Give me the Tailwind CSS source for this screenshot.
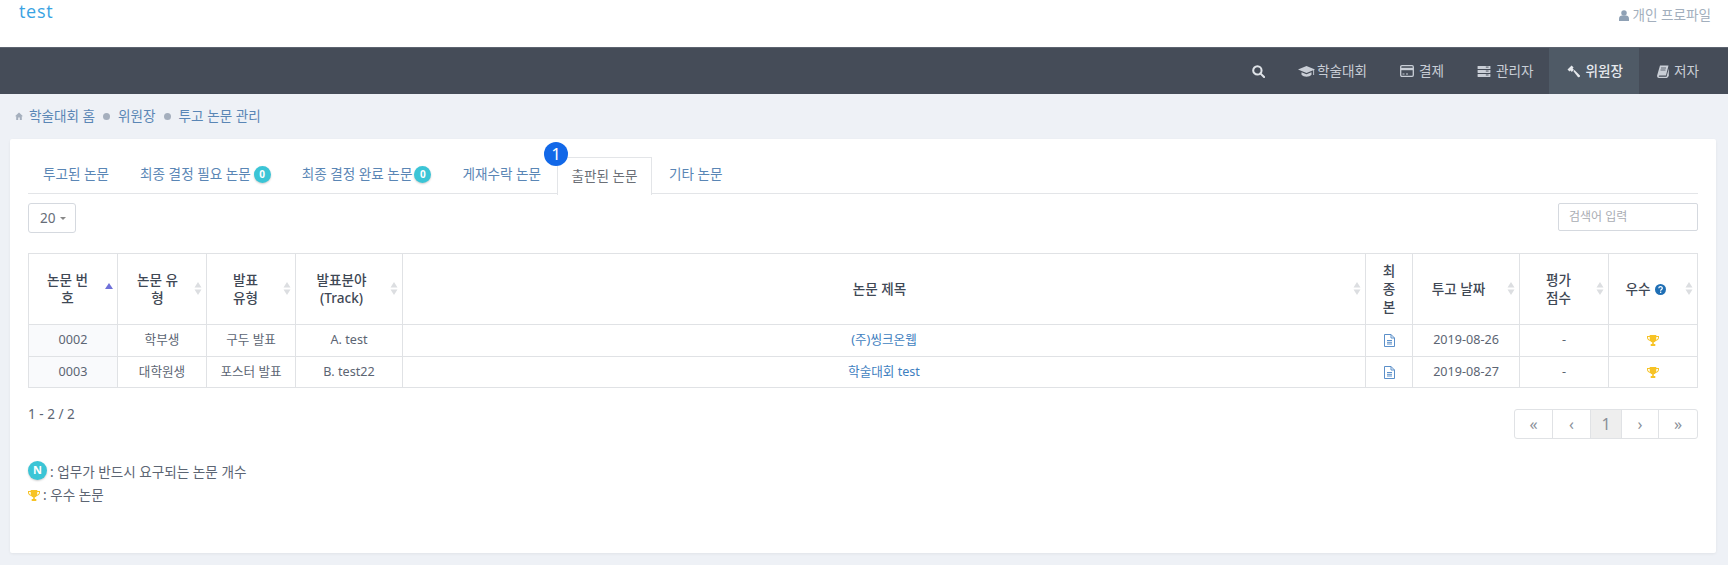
<!DOCTYPE html>
<html lang="ko">
<head>
    <meta charset="UTF-8">
    <title>투고 논문 관리</title>
    <script src="https://cdn.jsdelivr.net/npm/@tailwindcss/browser@4"></script>
</head>
<body class="bg-[#eef1f6] text-[13.6px] text-[#5c6573] font-['Noto_Sans','Noto_Sans_CJK_KR',sans-serif] overflow-hidden h-[565px]">
    <!-- top bar -->
    <header class="h-[47px] bg-white flex justify-between pl-[19px] pr-[17px]">
        <a class="text-[18px] leading-[22px] tracking-[0.7px] text-[#3aa3e3] font-['Open_Sans',sans-serif]">test</a>
        <a class="flex items-center gap-[3px] h-[30px] text-[13.6px] text-[#a3afbd]">
            <svg class="w-[10px] h-[11px]" viewBox="0 0 12 13" fill="#8fa1b5"><circle cx="6" cy="3.5" r="3.3"/><path d="M0 13V10c0-2.2 1.8-3.6 3.5-3.6h5C10.200 6.400 12 7.800 12 10v3z"/></svg>
            개인 프로파일
        </a>
    </header>

    <!-- nav -->
    <nav class="h-[47px] bg-[#454c58] border-t border-[#5d6470] flex justify-end pr-[11px] text-[13.6px] text-[#c9ced6]">
        <a class="flex items-center pl-[18px] pr-[18px]">
            <svg class="w-[13px] h-[13px]" viewBox="0 0 14 14" fill="none" stroke="#dfe3e8" stroke-width="2.200"><circle cx="5.800" cy="5.800" r="4.500"/><path d="M9 9l4 4" stroke-linecap="round"/></svg>
        </a>
        <a class="flex items-center gap-[2px] px-[15px]">
            <svg class="w-[17px] h-[13px]" viewBox="0 0 17 13" fill="#c9ced6"><path d="M8.500 1L0 4.500l8.500 3.500L17 4.500z"/><path d="M3.500 7.200v2.500c1 1.300 3 2 5 2s4-.7 5-2V7.200l-5 2z"/><rect x="15.200" y="5" width="0.900" height="5"/></svg>
            학술대회
        </a>
        <a class="flex items-center gap-[5px] pl-[18px] pr-[15px]">
            <svg class="w-[14px] h-[12px]" viewBox="0 0 14 12" fill="none" stroke="#c9ced6"><rect x="0.700" y="0.700" width="12.600" height="10.600" rx="1.200" stroke-width="1.300"/><path d="M1 4h12" stroke-width="2.400"/><path d="M2.500 9h2M6 9h2" stroke-width="1"/></svg>
            결제
        </a>
        <a class="flex items-center gap-[5px] pl-[18px] pr-[16px]">
            <svg class="w-[14px] h-[11px]" viewBox="0 0 14 12" fill="#c9ced6"><rect y="0" width="14" height="3.400" rx="0.500"/><rect y="4.300" width="14" height="3.400" rx="0.500"/><rect y="8.600" width="14" height="3.400" rx="0.500"/><path d="M9 1.200h3M9 5.500h3M9 9.800h3" stroke="#454c58" stroke-width="1"/></svg>
            관리자
        </a>
        <a class="flex items-center gap-[5px] pl-[18px] pr-[16px] bg-[#4f5a66] text-[#e6e9ed] font-medium">
            <svg class="w-[13px] h-[13px]" viewBox="0 0 13 13" fill="#e6e9ed"><path d="M4.600 0.500L0.500 4.600l2 2 1-1 1.300 1.300 2.100-2.100L5.600 3.500l1-1z"/><path d="M6.300 6l1.100-1.100 5.300 5.300c.4.400.4 1 0 1.500l-.3.300c-.4.400-1 .4-1.500 0z"/></svg>
            위원장
        </a>
        <a class="flex items-center gap-[5px] px-[18px]">
            <svg class="w-[12px] h-[13px]" viewBox="0 0 12 13" fill="#c9ced6"><path d="M3 0.500h8.500L9 10.500H2.500C1.600 10.500 1.500 11.800 2.500 11.800H9.500L11.800 3.500V11l-1.800 2H2C0.500 13-.2 11.500.2 10.300z"/><path d="M4 3h5M3.500 5h5" stroke="#454c58" stroke-width="0.800"/></svg>
            저자
        </a>
    </nav>

    <!-- breadcrumb -->
    <div class="h-[45px] flex items-center pl-[15px] pb-[1px] text-[13.6px] text-[#5a86b5]">
        <svg class="w-[8px] h-[8px] mr-[6px]" viewBox="0 0 8 8" fill="#a5afbd"><path d="M4 .5L0 4.200h1.200V8h2V5.500h1.600V8h2V4.200H8z"/></svg>
        <span>학술대회 홈</span>
        <span class="w-[7px] h-[7px] rounded-full bg-[#a5afbd] mx-[8px]"></span>
        <span>위원장</span>
        <span class="w-[7px] h-[7px] rounded-full bg-[#a5afbd] mx-[8px]"></span>
        <span>투고 논문 관리</span>
    </div>

    <!-- card -->
    <main class="relative ml-[10px] w-[1706px] h-[414px] bg-white rounded-[2px] shadow-[0_1px_3px_rgba(0,0,0,0.06)] px-[18px] pt-[18px]">
        <!-- tabs -->
        <div class="relative flex h-[37px] border-b border-[#e3e5e8] text-[13.6px] text-[#5a86b5]">
            <a class="flex items-center pl-[15px] pr-[16px] pb-[1px]">투고된 논문</a>
            <a class="flex items-center gap-[3px] pl-[15px] pr-[15px] pb-[1px]">최종 결정 필요 논문 <span class="w-[17px] h-[17px] rounded-full bg-[#3bc5d6] text-white text-[10px] font-bold flex items-center justify-center shadow-[0_1px_2px_rgba(0,0,0,0.2)]">0</span></a>
            <a class="flex items-center gap-[2px] pl-[16px] pr-[15px] pb-[1px]">최종 결정 완료 논문 <span class="w-[17px] h-[17px] rounded-full bg-[#3bc5d6] text-white text-[10px] font-bold flex items-center justify-center shadow-[0_1px_2px_rgba(0,0,0,0.2)]">0</span></a>
            <a class="flex items-center pl-[16px] pr-[16px] pb-[1px]">게재수락 논문</a>
            <a class="flex items-center justify-center w-[95px] h-[38px] pb-[1px] bg-white border border-b-0 border-[#e3e5e8] text-[#6b6f76]">출판된 논문</a>
            <a class="flex items-center px-[17px] pb-[1px]">기타 논문</a>
            <span class="absolute left-[516px] top-[-15px] w-[24px] h-[24px] rounded-full bg-[#1268e8] text-white text-[17px] flex items-center justify-center">1</span>
        </div>

        <!-- filter row -->
        <div class="flex justify-between items-start mt-[9px]">
            <div class="w-[48px] h-[30px] border border-[#d5d9df] rounded-[3px] flex items-center pl-[11px] gap-[4px] text-[13.6px] text-[#666d78]">
                20 <span class="w-0 h-0 border-x-[3px] border-x-transparent border-t-[3px] border-t-[#888]"></span>
            </div>
            <div class="w-[140px] h-[28px] border border-[#d5d9df] rounded-[2px] flex items-center pl-[10px] text-[12px] text-[#a9adb3]">검색어 입력</div>
        </div>

        <!-- table -->
        <table class="mt-[20px] w-[1670px] table-fixed border-collapse text-center text-[12.6px]">
            <colgroup>
                <col class="w-[89px]"><col class="w-[89px]"><col class="w-[89px]"><col class="w-[107px]"><col><col class="w-[47px]"><col class="w-[107px]"><col class="w-[89px]"><col class="w-[89px]">
            </colgroup>
            <thead class="text-[13.6px] text-[#3f4855]">
                <tr class="h-[71px]">
                    <th class="relative border border-[#e0e2e5] font-medium leading-[18px] pl-[17px] pr-[28px]">논문 번호<svg class="absolute right-[4px] top-[29px] w-[8px] h-[6px]" viewBox="0 0 8 6" fill="#6f71d9"><path d="M4 0l4 6H0z"/></svg></th>
                    <th class="relative border border-[#e0e2e5] font-medium leading-[18px] pl-[15px] pr-[24px]">논문 유형<svg class="absolute right-[4px] top-[28px] w-[8px] h-[13px]" viewBox="0 0 8 13" fill="#dcdee1"><path d="M4 0l3.500 5.500H.5zM4 13L.5 7.500h7z"/></svg></th>
                    <th class="relative border border-[#e0e2e5] font-medium leading-[18px] pl-[15px] pr-[26px]">발표<br>유형<svg class="absolute right-[4px] top-[28px] w-[8px] h-[13px]" viewBox="0 0 8 13" fill="#dcdee1"><path d="M4 0l3.500 5.500H.5zM4 13L.5 7.500h7z"/></svg></th>
                    <th class="relative border border-[#e0e2e5] font-medium leading-[18px] pl-[15px] pr-[30px]">발표분야<br>(Track)<svg class="absolute right-[4px] top-[28px] w-[8px] h-[13px]" viewBox="0 0 8 13" fill="#dcdee1"><path d="M4 0l3.500 5.500H.5zM4 13L.5 7.500h7z"/></svg></th>
                    <th class="relative border border-[#e0e2e5] font-medium leading-[18px] pl-[15px] pr-[24px]">논문 제목<svg class="absolute right-[4px] top-[28px] w-[8px] h-[13px]" viewBox="0 0 8 13" fill="#dcdee1"><path d="M4 0l3.500 5.500H.5zM4 13L.5 7.500h7z"/></svg></th>
                    <th class="border border-[#e0e2e5] font-medium leading-[18px] px-[13px]">최종본</th>
                    <th class="relative border border-[#e0e2e5] font-medium leading-[18px] pl-[15px] pr-[30px]">투고 날짜<svg class="absolute right-[4px] top-[28px] w-[8px] h-[13px]" viewBox="0 0 8 13" fill="#dcdee1"><path d="M4 0l3.500 5.500H.5zM4 13L.5 7.500h7z"/></svg></th>
                    <th class="relative border border-[#e0e2e5] font-medium leading-[18px] pl-[15px] pr-[26px]">평가<br>점수<svg class="absolute right-[4px] top-[28px] w-[8px] h-[13px]" viewBox="0 0 8 13" fill="#dcdee1"><path d="M4 0l3.500 5.500H.5zM4 13L.5 7.500h7z"/></svg></th>
                    <th class="relative border border-[#e0e2e5] font-medium leading-[18px] pl-[15px] pr-[30px]">
                        <span class="inline-flex items-center gap-[4px] whitespace-nowrap">우수
                            <svg class="w-[11px] h-[11px]" viewBox="0 0 11 11"><circle cx="5.500" cy="5.500" r="5.500" fill="#1f6fb5"/><path d="M3.800 4.200c0-2.100 3.500-2.100 3.500 0 0 1.300-1.700 1.200-1.700 2.500" fill="none" stroke="#fff" stroke-width="1.200"/><rect x="5" y="7.600" width="1.300" height="1.300" fill="#fff"/></svg>
                        </span>
                        <svg class="absolute right-[4px] top-[28px] w-[8px] h-[13px]" viewBox="0 0 8 13" fill="#dcdee1"><path d="M4 0l3.500 5.500H.5zM4 13L.5 7.500h7z"/></svg>
                    </th>
                </tr>
            </thead>
            <tbody>
                <tr class="h-[32px]">
                    <td class="border border-[#e0e2e5] bg-[#f9fafc]">0002</td>
                    <td class="border border-[#e0e2e5]">학부생</td>
                    <td class="border border-[#e0e2e5]">구두 발표</td>
                    <td class="border border-[#e0e2e5]">A. test</td>
                    <td class="border border-[#e0e2e5] text-[#3f7fbf]">(주)씽크온웹</td>
                    <td class="border border-[#e0e2e5]"><svg class="inline-block w-[11px] h-[13px]" viewBox="0 0 11 13" fill="none" stroke="#5b8fc9"><path d="M.5.5h6.500l3.500 3.500v8.500H.5z"/><path d="M7 .5V4h3.500M3 6.500h5M3 8.300h5M3 10h5"/></svg></td>
                    <td class="border border-[#e0e2e5]">2019-08-26</td>
                    <td class="border border-[#e0e2e5]">-</td>
                    <td class="border border-[#e0e2e5]"><svg class="inline-block w-[12px] h-[11px]" viewBox="0 0 12 11" fill="#f7c325"><path d="M2.700 0h6.600v1H12v1.500C12 4.500 10.500 5.700 8.800 5.900 8.200 6.700 7.500 7 6.800 7.200V9h1.500v2H3.700V9h1.500V7.200C4.500 7 3.800 6.700 3.200 5.900 1.500 5.700 0 4.500 0 2.500V1h2.700zM1 2v.5c0 1.100.8 2 2 2.300C2.800 3.900 2.700 3 2.700 2zM9.300 2c0 1-.1 1.900-.3 2.800 1.200-.3 2-1.200 2-2.300V2z"/></svg></td>
                </tr>
                <tr class="h-[31px]">
                    <td class="border border-[#e0e2e5] bg-[#f9fafc]">0003</td>
                    <td class="border border-[#e0e2e5]">대학원생</td>
                    <td class="border border-[#e0e2e5]">포스터 발표</td>
                    <td class="border border-[#e0e2e5]">B. test22</td>
                    <td class="border border-[#e0e2e5] text-[#3f7fbf]">학술대회 test</td>
                    <td class="border border-[#e0e2e5]"><svg class="inline-block w-[11px] h-[13px]" viewBox="0 0 11 13" fill="none" stroke="#5b8fc9"><path d="M.5.5h6.500l3.500 3.500v8.500H.5z"/><path d="M7 .5V4h3.500M3 6.500h5M3 8.300h5M3 10h5"/></svg></td>
                    <td class="border border-[#e0e2e5]">2019-08-27</td>
                    <td class="border border-[#e0e2e5]">-</td>
                    <td class="border border-[#e0e2e5]"><svg class="inline-block w-[12px] h-[11px]" viewBox="0 0 12 11" fill="#f7c325"><path d="M2.700 0h6.600v1H12v1.500C12 4.500 10.500 5.700 8.800 5.900 8.200 6.700 7.500 7 6.800 7.200V9h1.500v2H3.700V9h1.500V7.200C4.500 7 3.800 6.700 3.200 5.900 1.500 5.700 0 4.500 0 2.500V1h2.700zM1 2v.5c0 1.100.8 2 2 2.300C2.800 3.900 2.700 3 2.700 2zM9.300 2c0 1-.1 1.900-.3 2.800 1.200-.3 2-1.200 2-2.300V2z"/></svg></td>
                </tr>
            </tbody>
        </table>

        <!-- pagination row -->
        <div class="flex justify-between items-start mt-[21px]">
            <span class="text-[13.6px] text-[#5c6573] leading-[18px] -mt-[4px]">1 - 2 / 2</span>
            <div class="flex h-[30px] border border-[#e0e2e5] rounded-[3px] text-[#8a9099] text-[16px]">
                <a class="w-[38px] flex items-center justify-center border-r border-[#e0e2e5]">«</a>
                <a class="w-[38px] flex items-center justify-center border-r border-[#e0e2e5]">‹</a>
                <a class="w-[31px] flex items-center justify-center border-r border-[#e0e2e5] bg-[#eeeeee]">1</a>
                <a class="w-[37px] flex items-center justify-center border-r border-[#e0e2e5]">›</a>
                <a class="w-[38px] flex items-center justify-center">»</a>
            </div>
        </div>

        <!-- legend -->
        <div class="mt-[21px] text-[13.6px]">
            <div class="flex items-center h-[24px]">
                <span class="w-[19px] h-[19px] -mt-[4px] rounded-full bg-[#3bc5d6] text-white text-[11px] font-bold flex items-center justify-center shadow-[0_1px_2px_rgba(0,0,0,0.2)]">N</span>
                <span class="ml-[3px]">: 업무가 반드시 요구되는 논문 개수</span>
            </div>
            <div class="flex items-center h-[24px] mt-[-1px]">
                <svg class="w-[12px] h-[11px]" viewBox="0 0 12 11" fill="#f7c325"><path d="M2.700 0h6.600v1H12v1.500C12 4.500 10.500 5.700 8.800 5.900 8.200 6.700 7.500 7 6.800 7.200V9h1.500v2H3.700V9h1.500V7.200C4.500 7 3.800 6.700 3.200 5.900 1.500 5.700 0 4.500 0 2.500V1h2.700zM1 2v.5c0 1.100.8 2 2 2.300C2.800 3.900 2.700 3 2.700 2zM9.300 2c0 1-.1 1.900-.3 2.800 1.200-.3 2-1.200 2-2.300V2z"/></svg>
                <span class="ml-[3px]">: 우수 논문</span>
            </div>
        </div>
    </main>
</body>
</html>
